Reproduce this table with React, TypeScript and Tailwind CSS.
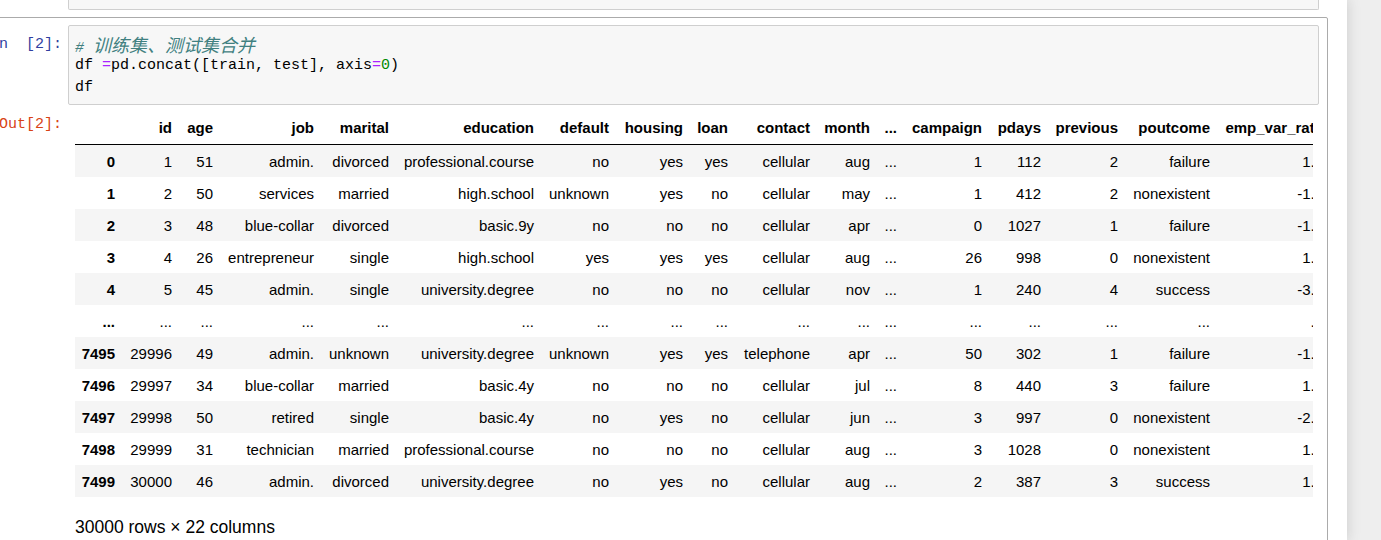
import React from "react";

const COLS =
  "grid grid-cols-[47px_57px_41px_101px_75px_145px_75px_74px_45px_82px_60px_27px_85px_59px_77px_92px_113px]";

const headers = [
  "",
  "id",
  "age",
  "job",
  "marital",
  "education",
  "default",
  "housing",
  "loan",
  "contact",
  "month",
  "...",
  "campaign",
  "pdays",
  "previous",
  "poutcome",
  "emp_var_rate",
];

const rows: string[][] = [
  ["0", "1", "51", "admin.", "divorced", "professional.course", "no", "yes", "yes", "cellular", "aug", "...", "1", "112", "2", "failure", "1.4"],
  ["1", "2", "50", "services", "married", "high.school", "unknown", "yes", "no", "cellular", "may", "...", "1", "412", "2", "nonexistent", "-1.8"],
  ["2", "3", "48", "blue-collar", "divorced", "basic.9y", "no", "no", "no", "cellular", "apr", "...", "0", "1027", "1", "failure", "-1.8"],
  ["3", "4", "26", "entrepreneur", "single", "high.school", "yes", "yes", "yes", "cellular", "aug", "...", "26", "998", "0", "nonexistent", "1.4"],
  ["4", "5", "45", "admin.", "single", "university.degree", "no", "no", "no", "cellular", "nov", "...", "1", "240", "4", "success", "-3.4"],
  ["...", "...", "...", "...", "...", "...", "...", "...", "...", "...", "...", "...", "...", "...", "...", "...", "..."],
  ["7495", "29996", "49", "admin.", "unknown", "university.degree", "unknown", "yes", "yes", "telephone", "apr", "...", "50", "302", "1", "failure", "-1.8"],
  ["7496", "29997", "34", "blue-collar", "married", "basic.4y", "no", "no", "no", "cellular", "jul", "...", "8", "440", "3", "failure", "1.4"],
  ["7497", "29998", "50", "retired", "single", "basic.4y", "no", "yes", "no", "cellular", "jun", "...", "3", "997", "0", "nonexistent", "-2.9"],
  ["7498", "29999", "31", "technician", "married", "professional.course", "no", "no", "no", "cellular", "aug", "...", "3", "1028", "0", "nonexistent", "1.4"],
  ["7499", "30000", "46", "admin.", "divorced", "university.degree", "no", "yes", "no", "cellular", "aug", "...", "2", "387", "3", "success", "1.4"],
];

const mono = "font-['Liberation_Mono','DejaVu_Sans_Mono',monospace]";

export default function App() {
  return (
    <div className="w-[1381px] h-[540px] overflow-hidden flex bg-[#eeeeee] font-['Liberation_Sans',Arial,sans-serif] text-black">
      <div className="relative z-10 w-[1347px] h-[540px] bg-white shadow-[0_0_12px_1px_rgba(87,87,87,0.2)] overflow-hidden">
        {/* previous cell input fragment */}
        <div className="ml-[68px] w-[1251px] h-[10px] border border-t-0 border-[#cfcfcf] bg-[#f7f7f7] rounded-b-[2px]" />

        {/* selected cell */}
        <div className="mt-[7px] ml-[-20px] w-[1348px] h-[600px] border border-[#ababab] rounded-[2px] pt-[7px]">
          {/* input */}
          <div className="flex">
            <div className={`w-[87px] shrink-0 pr-[6px] pt-[9px] text-right text-[15px] leading-[21.5px] text-[#303f9f] whitespace-pre ${mono}`}>
              {"In  [2]:"}
            </div>
            <div className={`w-[1251px] h-[80px] shrink-0 border border-[#cfcfcf] bg-[#f7f7f7] rounded-[2px] pl-[6px] pt-[7px] text-[15px] leading-[22px] whitespace-pre ${mono}`}>
              <div className="h-[22px] italic text-[#408080] overflow-visible">
                {"# "}
                <span className="text-[18px] leading-[22px] font-['Noto_Sans_CJK_SC',sans-serif]">训练集、测试集合并</span>
              </div>
              <div className="h-[22px]">
                {"df "}
                <span className="text-[#aa22ff]">=</span>
                {"pd.concat([train, test], axis"}
                <span className="text-[#aa22ff]">=</span>
                <span className="text-[#008800]">0</span>
                {")"}
              </div>
              <div className="h-[22px]">df</div>
            </div>
          </div>

          {/* output */}
          <div className="flex">
            <div className={`w-[87px] shrink-0 pr-[6px] pt-[9px] text-right text-[15px] leading-[21.5px] text-[#d84315] whitespace-pre ${mono}`}>
              Out[2]:
            </div>
            <div className="ml-[7px] pt-[7px]">
              <div className="w-[1238px] overflow-hidden">
                <div className="w-[1256px] text-[15px]">
                  <div className={`${COLS} h-[33px] border-b border-black font-bold items-center`}>
                    {headers.map((h, i) => (
                      <div key={i} className="pr-[7px] text-right whitespace-nowrap">
                        {h}
                      </div>
                    ))}
                  </div>
                  {rows.map((r, ri) => (
                    <div
                      key={ri}
                      className={`${COLS} h-[32px] pt-[2px] items-center ${ri % 2 === 0 ? "bg-[#f5f5f5]" : "bg-white"}`}
                    >
                      {r.map((c, ci) => (
                        <div
                          key={ci}
                          className={`pr-[7px] text-right whitespace-nowrap ${ci === 0 ? "font-bold" : ""}`}
                        >
                          {c}
                        </div>
                      ))}
                    </div>
                  ))}
                </div>
              </div>
              <div className="mt-[20px] text-[17.5px] leading-[20px]">30000 rows × 22 columns</div>
            </div>
          </div>
        </div>
      </div>
      <div className="flex-1 bg-[#eeeeee]" />
    </div>
  );
}
